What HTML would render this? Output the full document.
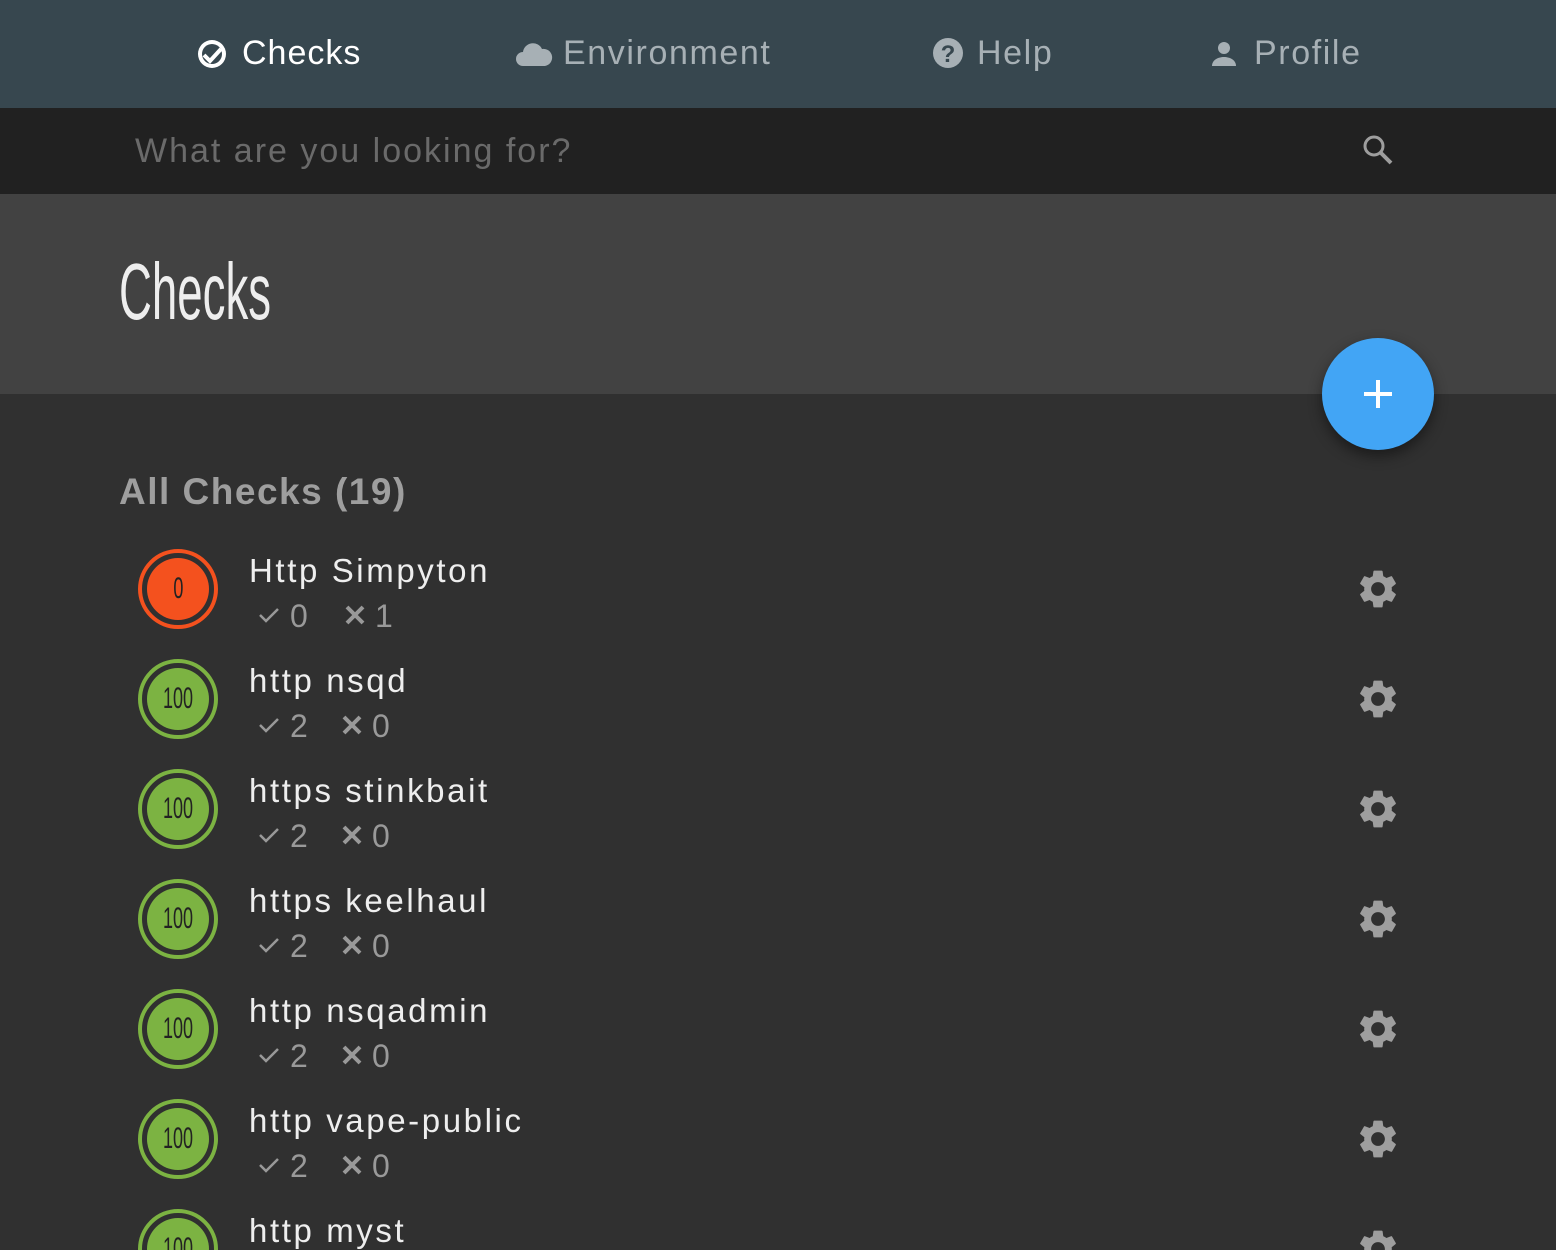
<!DOCTYPE html>
<html><head><meta charset="utf-8"><style>
*{margin:0;padding:0;box-sizing:border-box}
html,body{width:1556px;height:1250px;overflow:hidden}
body{background:#303030;font-family:"Liberation Sans",sans-serif;position:relative}
.a{position:absolute}
.nav{left:0;top:0;width:1556px;height:108px;background:#37474f}
.nt{font-size:34px;color:#a7b0b5;top:34px;white-space:nowrap;letter-spacing:1.6px}
.search{left:0;top:108px;width:1556px;height:86px;background:#212121}
.hdr{left:0;top:194px;width:1556px;height:200px;background:#424242}
.title{left:119px;top:246px;font-size:80px;color:#eee;transform:scaleX(.57);transform-origin:left top;font-weight:300}
.fab{left:1322px;top:338px;width:112px;height:112px;border-radius:50%;background:#42a5f5;box-shadow:0 6px 14px rgba(0,0,0,.45)}
.row .ring{width:80px;height:80px;border-radius:50%;border:4px solid;}
.row .in{position:absolute;left:9px;top:9px;width:62px;height:62px;border-radius:50%;color:#222;font-size:30px;text-align:center;line-height:62px;}
.in span{display:inline-block;transform:scaleX(.6)}
.nm{font-size:33px;color:#eee;white-space:nowrap;letter-spacing:2.6px}
.st{font-size:32px;color:#999;white-space:nowrap}
</style></head><body>
<div class="a nav"></div>
<svg class="a" style="left:196px;top:38px" width="32" height="32" viewBox="0 0 32 32"><circle cx="16" cy="16" r="14" fill="#fff"/><circle cx="16" cy="16" r="10" fill="#37474f"/><path d="M8 17l6 6 11-12" stroke="#fff" stroke-width="4" fill="none"/></svg>
<div class="a nt" style="left:242px;color:#fff;letter-spacing:1px">Checks</div>
<svg class="a" style="left:515px;top:40px" width="38" height="28" viewBox="0 0 38 28"><path d="M8 26a7 7 0 0 1 0-14 10 10 0 0 1 19-3 8 8 0 0 1 3 17z" fill="#a7b0b5"/></svg>
<div class="a nt" style="left:563px">Environment</div>
<svg class="a" style="left:932px;top:37px" width="32" height="32" viewBox="0 0 32 32"><circle cx="16" cy="16" r="15" fill="#a7b0b5"/><text x="16" y="25" text-anchor="middle" font-size="24" font-weight="bold" fill="#37474f" font-family="Liberation Sans">?</text></svg>
<div class="a nt" style="left:977px">Help</div>
<svg class="a" style="left:1210px;top:40px" width="28" height="28" viewBox="0 0 28 28"><circle cx="14" cy="8" r="6" fill="#a7b0b5"/><path d="M2 26c0-6 6-9 12-9s12 3 12 9z" fill="#a7b0b5"/></svg>
<div class="a nt" style="left:1254px">Profile</div>
<div class="a search"></div>
<div class="a" style="left:135px;top:132px;font-size:34px;color:#6a6a6a;letter-spacing:2px;white-space:nowrap">What are you looking for?</div>
<svg class="a" style="left:1362px;top:134px" width="32" height="32" viewBox="0 0 32 32"><circle cx="12" cy="12" r="9" stroke="#9e9e9e" stroke-width="3" fill="none"/><path d="M18 18l11 11" stroke="#9e9e9e" stroke-width="4"/></svg>
<div class="a hdr"></div>
<div class="a title">Checks</div>
<div class="a fab"><svg width="112" height="112" viewBox="0 0 112 112"><path d="M56 42v28M42 56h28" stroke="#fff" stroke-width="4"/></svg></div>
<div class="a" style="left:119px;top:471px;font-size:37px;font-weight:bold;color:#9e9e9e;letter-spacing:1.5px;white-space:nowrap">All Checks (19)</div>

<div id="rows"></div>
<script>
var d=[["Http Simpyton","0","0","1",1],["http nsqd","100","2","0"],["https stinkbait","100","2","0"],["https keelhaul","100","2","0"],["http nsqadmin","100","2","0"],["http vape-public","100","2","0"],["http myst","100","2","0"]];
var h="";
d.forEach(function(r,i){var y=549+i*110;var c=r[4]?"#f4511e":"#7cb342";
h+='<div class="a row" style="left:138px;top:'+y+'px"><div class="ring" style="border-color:'+c+'"></div><div class="in" style="background:'+c+'"><span>'+r[1]+'</span></div></div>';
h+='<div class="a nm" style="left:249px;top:'+(y+3)+'px">'+r[0]+'</div>';
h+='<svg class="a" style="left:258px;top:'+(y+57)+'px" width="22" height="18" viewBox="0 0 22 18"><path d="M2 9l6 6L20 3" stroke="#999" stroke-width="2.5" fill="none"/></svg>';
h+='<div class="a st" style="left:290px;top:'+(y+49)+'px">'+r[2]+'</div>';
var xx=r[4]?344:341;
h+='<svg class="a" style="left:'+xx+'px;top:'+(y+56)+'px" width="22" height="20" viewBox="0 0 22 20"><path d="M3 2l16 16M19 2L3 18" stroke="#999" stroke-width="4"/></svg>';
h+='<div class="a st" style="left:'+(r[4]?375:372)+'px;top:'+(y+49)+'px">'+r[3]+'</div>';
h+='<svg class="a" style="left:1355px;top:'+(y+17)+'px" width="46" height="46" viewBox="0 0 24 24"><path fill="#9e9e9e" d="M19.14 12.94c.04-.3.06-.61.06-.94 0-.32-.02-.64-.07-.94l2.030-1.58a.49.49 0 0 0 .12-.61l-1.92-3.32a.488.488 0 0 0-.59-.22l-2.39.96c-.5-.38-1.03-.7-1.62-.94l-.36-2.54a.484.484 0 0 0-.48-.41h-3.84c-.24 0-.43.17-.47.41l-.36 2.54c-.59.24-1.13.57-1.62.94l-2.39-.96c-.22-.08-.47 0-.59.22L2.74 8.87c-.12.21-.08.47.12.61l2.03 1.58c-.05.3-.09.63-.09.94s.02.64.07.94l-2.03 1.58a.49.49 0 0 0-.12.61l1.92 3.32c.12.22.37.29.59.22l2.39-.96c.5.38 1.03.7 1.62.94l.36 2.54c.05.24.24.41.48.41h3.84c.24 0 .44-.17.47-.41l.36-2.54c.59-.24 1.130-.56 1.62-.94l2.39.96c.22.08.47 0 .59-.22l1.92-3.32c.12-.22.07-.47-.12-.61l-2.01-1.58zM12 15.6c-1.98 0-3.6-1.62-3.6-3.6s1.62-3.6 3.6-3.6 3.6 1.62 3.6 3.6-1.62 3.6-3.6 3.6z"/></svg>';
});
document.getElementById("rows").innerHTML=h;
</script>
</body></html>
